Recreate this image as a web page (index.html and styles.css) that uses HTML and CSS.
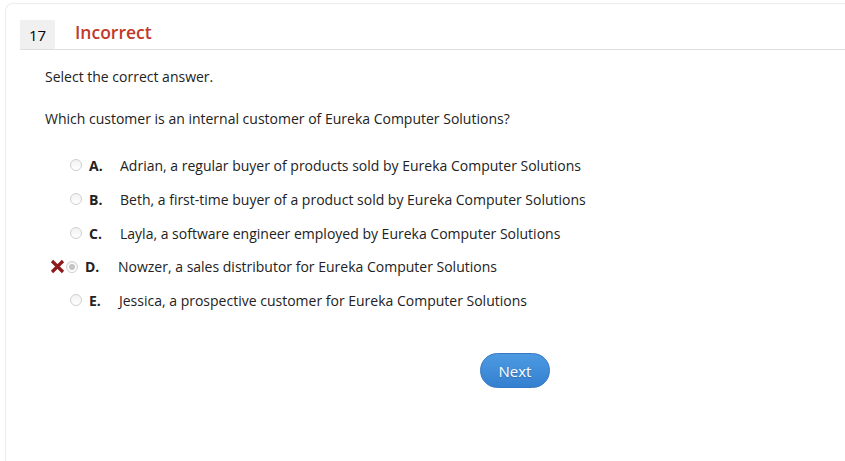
FILE: index.html
```html
<!DOCTYPE html>
<html>
<head>
<meta charset="utf-8">
<link rel="stylesheet" href="styles.css">
</head>
<body>
<div class="card">
  <div class="header">
    <div class="num">17</div>
    <div class="status">Incorrect</div>
  </div>
  <div class="body">
    <p class="instr">Select the correct answer.</p>
    <p class="question">Which customer is an internal customer of Eureka Computer Solutions?</p>
    <ul class="options">
      <li class="opt"><span class="mark"></span><span class="radio"></span><span class="letter">A.</span><span class="text">Adrian, a regular buyer of products sold by Eureka Computer Solutions</span></li>
      <li class="opt"><span class="mark"></span><span class="radio"></span><span class="letter">B.</span><span class="text">Beth, a first-time buyer of a product sold by Eureka Computer Solutions</span></li>
      <li class="opt"><span class="mark"></span><span class="radio"></span><span class="letter">C.</span><span class="text">Layla, a software engineer employed by Eureka Computer Solutions</span></li>
      <li class="opt wrong"><span class="mark"><svg width="15" height="15" viewBox="0 0 15 15"><path d="M2 2 L13 13 M13 2 L2 13" stroke="#8e1b1b" stroke-width="3.2" stroke-linecap="butt"/></svg></span><span class="radio checked"></span><span class="letter">D.</span><span class="text">Nowzer, a sales distributor for Eureka Computer Solutions</span></li>
      <li class="opt last"><span class="mark"></span><span class="radio"></span><span class="letter">E.</span><span class="text">Jessica, a prospective customer for Eureka Computer Solutions</span></li>
    </ul>
    <div class="actions"><button class="next">Next</button></div>
  </div>
</div>
</body>
</html>
```
FILE: styles.css
```css
html, body { margin: 0; padding: 0; background: #fff; }
body { font-family: "Open Sans", "Liberation Sans", sans-serif; color: #222; font-size: 14px; }
.card {
  box-sizing: border-box;
  margin: 3px 0 0 5px;
  height: 458px;
  border: 1px solid #ececec;
  border-right: none;
  border-bottom: none;
  border-radius: 8px 0 0 0;
  padding: 16px 0 0 14px;
}
.header { display: flex; align-items: center; border-bottom: 1px solid #dedede; height: 29px; }
.num { width: 35px; height: 29px; background: #f0f0f0; font-size: 15px; display: flex; align-items: center; justify-content: center; color: #000; }
.status { margin-left: 20px; color: #c0392b; font-size: 17.5px; font-weight: 600; position: relative; top: -3px; }
.body { padding-left: 25px; }
.instr { margin: 17px 0 0; line-height: 20px; }
.question { margin: 22px 0 0; line-height: 20px; }
.options { list-style: none; margin: 19px 0 0; padding: 0; }
.opt { display: flex; align-items: center; height: 34px; }
.mark { width: 25px; flex: none; display: flex; align-items: center; }
.radio { flex: none; box-sizing: border-box; width: 12px; height: 12px; border: 1px solid #cfcfcf; border-radius: 50%; background: linear-gradient(#f2f2f2, #fff); position: relative; }
.radio.checked::after { content: ""; position: absolute; left: 2px; top: 2px; width: 6px; height: 6px; border-radius: 50%; background: #c4c4c4; }
.letter { font-weight: 700; width: 31px; margin-left: 7px; flex: none; }
.wrong { height: 33px; }
.wrong .mark { width: 16px; margin-left: 5px; }
.wrong .letter { width: 33px; }
.last .text { margin-left: -1px; }
.actions { display: flex; padding-left: 435px; margin-top: 36px; }
.next {
  box-sizing: border-box; width: 70px; height: 35px; border-radius: 18px; border: 1px solid #3577c2;
  background: linear-gradient(#4d9ae2, #3480d0);
  color: #fff; font-family: "Open Sans", "Liberation Sans", sans-serif; font-size: 15px;
  text-shadow: 0 1px 1px rgba(0,0,0,0.2);
}
```
